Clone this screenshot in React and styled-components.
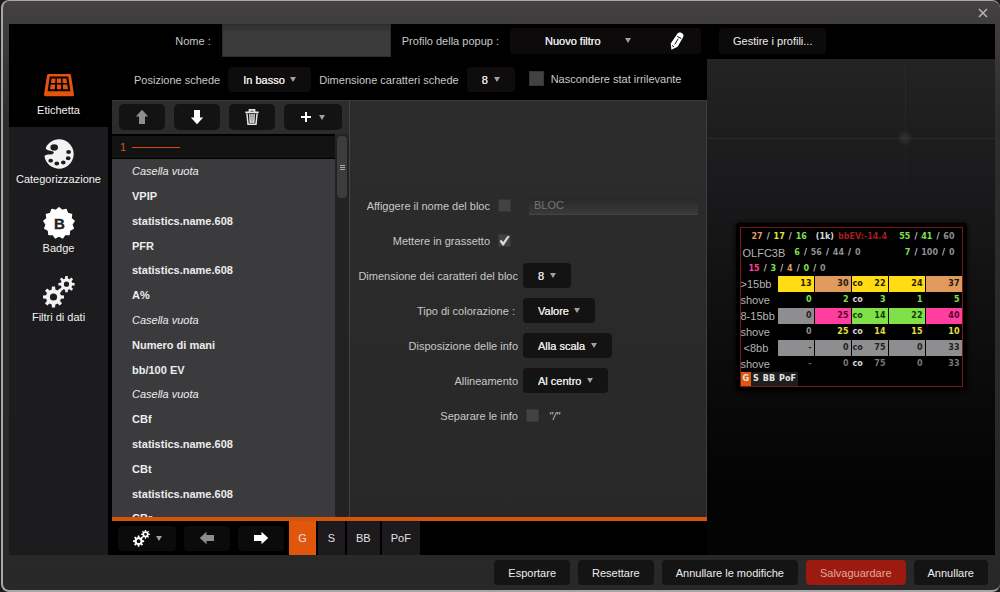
import React from 'react';
import styled, { createGlobalStyle, css } from 'styled-components';

const GlobalStyle = createGlobalStyle`
  * { box-sizing: border-box; }

  body {
    margin: 0;
    background: #1c1c1c;
    color: #c8c8c8;
    font: 11px/14px "Liberation Sans", Arial, sans-serif;
  }

  button, input, select { font: inherit; color: inherit; }
  ul { list-style: none; margin: 0; padding: 0; }
`;

const statItems = [
  { name: 'Casella vuota', empty: true },
  { name: 'VPIP' },
  { name: 'statistics.name.608' },
  { name: 'PFR' },
  { name: 'statistics.name.608' },
  { name: 'A%' },
  { name: 'Casella vuota', empty: true },
  { name: 'Numero di mani' },
  { name: 'bb/100 EV' },
  { name: 'Casella vuota', empty: true },
  { name: 'CBf' },
  { name: 'statistics.name.608' },
  { name: 'CBt' },
  { name: 'statistics.name.608' },
  { name: 'CBr' },
];

const colors = {
  yellow: '#ffdc14',
  tan: '#e09a5e',
  green: '#7fe04a',
  pink: '#ff3e9e',
  grey: '#8e8e90',
  red: '#a81d1d',
  white: '#d8d8d8',
  lemon: '#e6e03c',
};

// [text, text colour, fill]
const hudRows = [
  { label: '>15bb', cells: [['13', '#2a2000', 'yellow'], ['30', '#2a1808', 'tan'], ['22', '#2a2000', 'yellow'], ['24', '#2a2000', 'yellow'], ['37', '#2a1808', 'tan']] },
  { label: 'shove', cells: [['0', colors.green], ['2', colors.green], ['3', colors.green], ['1', colors.green], ['5', colors.green]] },
  { label: '8-15bb', cells: [['0', '#222', 'grey'], ['25', '#5c0030', 'pink'], ['14', '#123c00', 'green'], ['22', '#123c00', 'green'], ['40', '#5c0030', 'pink']] },
  { label: 'shove', cells: [['0', colors.grey], ['25', colors.lemon], ['14', colors.lemon], ['15', colors.lemon], ['10', colors.lemon]] },
  { label: '<8bb', indent: true, cells: [['-', '#222', 'grey'], ['0', '#222', 'grey'], ['75', '#222', 'grey'], ['0', '#222', 'grey'], ['33', '#222', 'grey']] },
  { label: 'shove', cells: [['-', '#666'], ['0', '#77777a'], ['75', '#77777a'], ['0', '#77777a'], ['33', '#77777a']] },
];

const gearPath = (cx, cy, outer, inner, hole, teeth = 8) => {
  const points = [];
  for (let i = 0; i < teeth; i++) {
    const a = (i * 2 * Math.PI) / teeth;
    const step = Math.PI / teeth;
    [[-0.62, inner], [-0.38, outer], [0.38, outer], [0.62, inner]].forEach(([k, r]) => {
      points.push(`${(cx + r * Math.sin(a + k * step)).toFixed(2)} ${(cy - r * Math.cos(a + k * step)).toFixed(2)}`);
    });
  }
  return `M${points.join('L')}ZM${cx - hole} ${cy}a${hole} ${hole} 0 1 0 ${hole * 2} 0a${hole} ${hole} 0 1 0 ${-hole * 2} 0Z`;
};

const sealPoints = Array.from({ length: 26 }, (_, i) => {
  const r = i % 2 ? 12.8 : 15.2;
  const a = (i * Math.PI) / 13;
  return `${(16 + r * Math.sin(a)).toFixed(2)},${(16 - r * Math.cos(a)).toFixed(2)}`;
}).join(' ');

const GearsIcon = ({ size = 32 }) => (
  <svg width={size} height={size} viewBox="0 0 32 32" fill="currentColor" fillRule="evenodd" aria-hidden="true">
    <path d={gearPath(10.5, 21, 10.6, 7.6, 3.6)} />
    <path d={gearPath(23.5, 8.2, 8.2, 5.8, 2.6)} />
  </svg>
);

const TableIcon = () => (
  <svg width="32" height="32" viewBox="0 0 32 32" fill="#e8520c" fillRule="evenodd" aria-hidden="true">
    <path d="M5.500 5h21q1.300 0 1.500 1.300L31 25.500q.2 1.700-1.300 1.700H2.300Q.8 27.200 1 25.500L4 6.300Q4.200 5 5.500 5zM6.800 7.600L4.600 22.200h22.800L25.200 7.600z" />
    <path d="M8.600 9.400h4l-.3 4.700H7.900zM13.900 9.400h4.200v4.700h-4.200zM19.400 9.400h4l.7 4.700h-4.400zM7.700 15.400h4.500l-.3 4.900H7zM13.900 15.400h4.200v4.900h-4.200zM19.800 15.400h4.500l.7 4.900h-4.900z" />
  </svg>
);

const PaletteIcon = () => (
  <svg width="32" height="32" viewBox="0 0 32 32" fill="currentColor" fillRule="evenodd" aria-hidden="true">
    <path d="M4 7.400A14.700 14.700 0 1 1 1.400 18C4 15.400 9.600 17.600 10.700 15C11.400 12.900 7 13.400 4 11.800C2.200 10.800 2.600 9.300 4 7.400ZM7.400 9.400a3.800 3.100 0 1 0 7.600 0a3.800 3.100 0 1 0-7.600 0ZM23.200 14a2.400 2 0 1 0 4.800 0a2.400 2 0 1 0-4.800 0ZM22.800 20.300a2.400 2 0 1 0 4.800 0a2.400 2 0 1 0-4.800 0ZM18 24.400a2.300 2 0 1 0 4.600 0a2.300 2 0 1 0-4.600 0ZM11.400 25.500a2.400 1.900 0 1 0 4.800 0a2.400 1.900 0 1 0-4.800 0ZM5.400 22.700a2.300 1.900 0 1 0 4.600 0a2.300 1.900 0 1 0-4.600 0Z" />
  </svg>
);

const BadgeIcon = () => (
  <svg width="32" height="32" viewBox="0 0 32 32" aria-hidden="true">
    <polygon points={sealPoints} fill="#fff" stroke="#fff" strokeWidth="1.500" strokeLinejoin="round" />
    <text x="16.5" y="21.5" fill="#222" stroke="#222" strokeWidth="0.400" fontSize="15" fontWeight="bold" textAnchor="middle" fontFamily="Liberation Sans">B</text>
  </svg>
);

const ArrowIcon = ({ turn = 0, color = '#fff' }) => (
  <svg width="16" height="16" viewBox="0 0 16 16" fill={color} aria-hidden="true">
    <path transform={`rotate(${turn} 8 8)`} d="M8 .8l6.200 6.700H11V15H5V7.500H1.800z" />
  </svg>
);

const TrashIcon = () => (
  <svg width="16" height="16" viewBox="0 0 16 16" fill="none" stroke="#e4e4e4" aria-hidden="true">
    <path d="M5.500 2.500V.8h5v1.700M1.300 3.300h13.400" strokeWidth="1.800" />
    <path d="M2.900 4.500l1.100 10.700h8l1.100-10.700M5.800 5l.5 9M8 5v9M10.200 5l-.5 9" strokeWidth="1.500" />
  </svg>
);

const PlusIcon = () => (
  <svg width="10" height="10" viewBox="0 0 10 10" stroke="#fff" strokeWidth="2" aria-hidden="true">
    <path d="M5 0v10M0 5h10" />
  </svg>
);

const PencilIcon = () => (
  <svg width="14" height="18" viewBox="0 0 14 18" aria-hidden="true">
    <path d="M7.200 2C8.300.3 10 .1 11.600.9c1.900 1 2.400 2.500 1.500 4.300L7.600 14.700 1.400 17.800.7 11.600z" fill="#fff" />
    <path d="M7.300 4.300l4 2.300M8.300 6.600l-3.600 6M2 13.500l1.900 1.200" stroke="#111" strokeWidth="1" fill="none" />
  </svg>
);

const Caret = () => (
  <svg width="6" height="5" viewBox="0 0 6 5" fill="#a0a0a0" aria-hidden="true">
    <path d="M0 0h6L3 5z" />
  </svg>
);

const Dropdown = ({ value, ...props }) => (
  <SelectBox $wide={props.$wide} $flat={props.$flat}>
    <select id={props.id} defaultValue={value}>
      <option>{value}</option>
    </select>
    <Caret />
  </SelectBox>
);

const Stats = ({ values }) => (
  <StatGroup>
    {values.map(([text, color], i) => (
      <React.Fragment key={i}>
        {i > 0 && <span>/</span>}
        <HudText $color={color}>{text}</HudText>
      </React.Fragment>
    ))}
  </StatGroup>
);

const Preview = () => (
  <HudWindow>
    <HudFrame>
      <HudLine $start={11}>
        <Stats values={[['27', colors.tan], ['17', colors.lemon], ['16', colors.green]]} />
        <StatGroup>
          <HudText $color={colors.white}>(1k)</HudText>
          <HudText $color={colors.red}>bbEV:-14.4</HudText>
        </StatGroup>
        <PushRight>
          <Stats values={[['55', colors.green], ['41', colors.green], ['60', colors.grey]]} />
        </PushRight>
      </HudLine>
      <HudLine $start={2}>
        <PlayerName>OLFC3B</PlayerName>
        <Stats values={[['6', colors.green], ['56', colors.grey], ['44', colors.grey], ['0', colors.grey]]} />
        <PushRight>
          <Stats values={[['7', colors.green], ['100', colors.grey], ['0', colors.grey]]} />
        </PushRight>
      </HudLine>
      <HudLine $start={8}>
        <Stats values={[['15', colors.pink], ['3', colors.green], ['4', colors.tan], ['0', colors.green], ['0', colors.grey]]} />
      </HudLine>
      <HudTable>
        <tbody>
          {hudRows.map((row, i) => (
            <tr key={i}>
              <HudLabel scope="row" $indent={row.indent}>{row.label}</HudLabel>
              {row.cells.map(([text, color, fill], j) => (
                <HudCell key={j} $color={color} $fill={colors[fill]}>
                  <div>
                    {j === 2 && <HudText $color={fill ? color : colors.white}>co</HudText>}
                    <span>{text}</span>
                  </div>
                </HudCell>
              ))}
            </tr>
          ))}
        </tbody>
      </HudTable>
      <HudTabs>
        <HudTab $active>G</HudTab>
        <HudTab>S</HudTab>
        <HudTab>BB</HudTab>
        <HudTab>PoF</HudTab>
      </HudTabs>
    </HudFrame>
  </HudWindow>
);

const App = () => (
  <>
    <GlobalStyle />
    <Window>
      <TitleBar>
        <CloseButton aria-label="Chiudi">
          <svg width="10" height="10" viewBox="0 0 10 10" stroke="#b4b2b2" strokeWidth="1.600" aria-hidden="true">
            <path d="M1 1l8 8M9 1L1 9" />
          </svg>
        </CloseButton>
      </TitleBar>

      <Body>
        <Sidebar>
          <NavItem $active><TableIcon />Etichetta</NavItem>
          <NavItem><PaletteIcon />Categorizzazione</NavItem>
          <NavItem><BadgeIcon />Badge</NavItem>
          <NavItem><GearsIcon />Filtri di dati</NavItem>
        </Sidebar>

        <Editor>
          <ProfileRow>
            <label htmlFor="name">Nome :</label>
            <NameInput id="name" />
            <label htmlFor="popup">Profilo della popup :</label>
            <ProfileBox>
              <Dropdown id="popup" value="Nuovo filtro" $wide />
              <IconButton aria-label="Modifica"><PencilIcon /></IconButton>
            </ProfileBox>
          </ProfileRow>

          <OptionsRow>
            <label htmlFor="position">Posizione schede</label>
            <Dropdown id="position" value="In basso" $flat />
            <label htmlFor="tabSize">Dimensione caratteri schede</label>
            <Dropdown id="tabSize" value="8" $flat />
            <HideOption>
              <Checkbox id="hide" $large />
              <label htmlFor="hide">Nascondere stat irrilevante</label>
            </HideOption>
          </OptionsRow>

          <Panels>
            <ListPanel>
              <Toolbar>
                <ToolButton aria-label="Su"><ArrowIcon color="#8d8d8d" /></ToolButton>
                <ToolButton aria-label="Giù"><ArrowIcon turn={180} /></ToolButton>
                <ToolButton aria-label="Elimina"><TrashIcon /></ToolButton>
                <ToolButton $wide aria-label="Aggiungi"><PlusIcon /><Caret /></ToolButton>
              </Toolbar>
              <ListArea>
                <StatList>
                  <ListHeader>1<Dash /></ListHeader>
                  {statItems.map((item, i) => (
                    <StatItem key={i} $empty={item.empty}>{item.name}</StatItem>
                  ))}
                </StatList>
                <Scrollbar>
                  <Thumb><i /><i /><i /></Thumb>
                </Scrollbar>
              </ListArea>
            </ListPanel>

            <Form>
              <Field $short>
                <label htmlFor="showName">Affiggere il nome del bloc</label>
                <Checkbox id="showName" />
                <BlocInput aria-label="Nome del bloc" placeholder="BLOC" disabled />
              </Field>
              <Field $short>
                <label htmlFor="bold">Mettere in grassetto</label>
                <Checkbox id="bold" defaultChecked />
              </Field>
              <Field>
                <label htmlFor="fontSize">Dimensione dei caratteri del bloc</label>
                <Dropdown id="fontSize" value="8" />
              </Field>
              <Field>
                <label htmlFor="coloring">{'Tipo di colorazione : '}</label>
                <Dropdown id="coloring" value="Valore" />
              </Field>
              <Field>
                <label htmlFor="layout">Disposizione delle info</label>
                <Dropdown id="layout" value="Alla scala" />
              </Field>
              <Field>
                <label htmlFor="align">Allineamento</label>
                <Dropdown id="align" value="Al centro" />
              </Field>
              <Field $loose>
                <label htmlFor="separate">Separare le info</label>
                <Checkbox id="separate" />
                <em>"/"</em>
              </Field>
            </Form>
          </Panels>

          <TabBar>
            <BarButtons>
              <BarButton $wide aria-label="Impostazioni"><GearsIcon size={17} /><Caret /></BarButton>
              <BarButton aria-label="Indietro"><ArrowIcon turn={-90} color="#8d8d8d" /></BarButton>
              <BarButton aria-label="Avanti"><ArrowIcon turn={90} /></BarButton>
            </BarButtons>
            <Tab $active>G</Tab>
            <Tab>S</Tab>
            <Tab>BB</Tab>
            <Tab>PoF</Tab>
          </TabBar>
        </Editor>

        <PreviewColumn>
          <PreviewHeader>
            <ManageButton>Gestire i profili...</ManageButton>
          </PreviewHeader>
          <PreviewArea>
            <Preview />
          </PreviewArea>
        </PreviewColumn>
      </Body>

      <Footer>
        <FooterButton>Esportare</FooterButton>
        <FooterButton>Resettare</FooterButton>
        <FooterButton>Annullare le modifiche</FooterButton>
        <FooterButton $primary>Salvaguardare</FooterButton>
        <FooterButton>Annullare</FooterButton>
      </Footer>
    </Window>
  </>
);

const Window = styled.div`
  display: flex;
  flex-direction: column;
  height: 100vh;
  min-height: 560px;
  margin-left: 1px;
  padding: 0 5px 0 6px;
  border: 2px solid #a6a8a8;
  border-top-width: 1px;
  border-right: 0;
  border-radius: 8px;
  background: linear-gradient(#454042, #403d3e 24px, #2c2c2c 120px, #282828);
  overflow: hidden;
`;

const TitleBar = styled.header`
  display: flex;
  justify-content: flex-end;
  align-items: center;
  flex: 0 0 23px;
  padding-right: 5px;
`;

const bareButton = css`
  display: inline-flex;
  align-items: center;
  justify-content: center;
  border: 0;
  padding: 0;
  background: none;
  cursor: pointer;
`;

const CloseButton = styled.button`
  ${bareButton}
  width: 14px;
  height: 14px;
`;

const Body = styled.main`
  display: grid;
  grid-template-columns: 99px minmax(0, 1fr) 288px;
  grid-template-rows: minmax(0, 1fr);
  flex: 1;
  min-height: 0;
  background: #000;
`;

const Sidebar = styled.nav`
  background: #1c1b1d;
`;

const NavItem = styled.button`
  ${bareButton}
  flex-direction: column;
  gap: 2px;
  width: 100%;
  padding: 11px 0 10px;
  color: #f2f2f2;
  white-space: nowrap;

  ${({ $active }) => $active && css`
    padding-top: 45px;
    background: #000;
  `}
`;

const Editor = styled.section`
  display: flex;
  flex-direction: column;
  min-width: 0;
  min-height: 0;
`;

const ProfileRow = styled.div`
  display: flex;
  align-items: center;
  justify-content: flex-end;
  gap: 11px;
  flex: 0 0 35px;
  padding: 0 6px 2px 0;
  white-space: nowrap;
`;

const NameInput = styled.input`
  flex: 0 1 169px;
  min-width: 60px;
  height: 33px;
  padding: 0 8px;
  border: 1px solid #2c2c2c;
  background: linear-gradient(#303030, #3b3b3b 8px);
`;

const ProfileBox = styled.div`
  display: flex;
  align-items: center;
  height: 26px;
  border-radius: 4px;
  background: #0c0a0b;
`;

const IconButton = styled.button`
  ${bareButton}
  width: 48px;
  height: 26px;
`;

const SelectBox = styled.span`
  display: inline-grid;
  align-items: center;
  height: 25px;
  border-radius: 4px;
  background: ${({ $flat, $wide }) => ($wide ? 'none' : $flat ? '#0e0c0d' : '#131314')};

  select {
    grid-area: 1 / 1;
    appearance: none;
    width: ${({ $wide }) => ($wide ? '143px' : 'auto')};
    height: 25px;
    padding: ${({ $wide }) => ($wide ? '0 29px 0 35px' : '0 26px 0 15px')};
    border: 0;
    background: none;
    color: #e4e4e4;
    text-shadow: 0 0 0 #e4e4e4;
    cursor: pointer;
  }

  svg {
    grid-area: 1 / 1;
    justify-self: end;
    margin-right: ${({ $wide }) => ($wide ? '22px' : '15px')};
    pointer-events: none;
  }
`;

const OptionsRow = styled.div`
  display: flex;
  align-items: center;
  gap: 8px;
  flex: 0 0 41px;
  padding-left: 26px;
  white-space: nowrap;
`;

const HideOption = styled.span`
  display: flex;
  align-items: center;
  gap: 7px;
  margin-left: 6px;
  padding-bottom: 2px;
`;

const Checkbox = styled.input.attrs({ type: 'checkbox' })`
  appearance: none;
  display: grid;
  place-items: center;
  width: ${({ $large }) => ($large ? 15 : 13)}px;
  height: ${({ $large }) => ($large ? 15 : 13)}px;
  margin: 0;
  border: 1px solid #363636;
  background: #434243;

  &:checked::before {
    content: '';
    width: 10px;
    height: 10px;
    background: #dcdcdc;
    clip-path: polygon(0 55%, 18% 42%, 36% 66%, 84% 0, 100% 10%, 42% 100%, 30% 100%);
  }
`;

const Panels = styled.div`
  display: flex;
  flex: 1;
  min-height: 0;
  margin-left: 4px;
  border-top: 1px solid #3a3a3a;
  background: linear-gradient(#2c2c2c, #282828);
`;

const ListPanel = styled.div`
  display: flex;
  flex-direction: column;
  flex: 0 0 238px;
  border-right: 1px solid #444;
`;

const Toolbar = styled.div`
  display: flex;
  gap: 9px;
  flex: 0 0 33px;
  padding: 3px 7px;
`;

const ToolButton = styled.button`
  ${bareButton}
  gap: 8px;
  flex: ${({ $wide }) => ($wide ? 58 : 46)} 1 0;
  height: 26px;
  border-radius: 5px;
  background: #131314;
`;

const ListArea = styled.div`
  display: flex;
  flex: 1;
  min-height: 0;
`;

const StatList = styled.ul`
  flex: 1;
  overflow: hidden;
  background: #3b3b3d;
`;

const ListHeader = styled.li`
  display: flex;
  align-items: center;
  gap: 6px;
  height: 25px;
  padding-left: 8px;
  border: solid #000;
  border-width: 2px 0 1px;
  background: #131212;
  color: #d2581a;
`;

const Dash = styled.span`
  width: 48px;
  height: 1px;
  background: #d84c14;
`;

const StatItem = styled.li`
  height: 25px;
  padding-left: 20px;
  line-height: 25px;
  color: #ededed;
  font-weight: ${({ $empty }) => ($empty ? 'normal' : 'bold')};
  font-style: ${({ $empty }) => ($empty ? 'italic' : 'normal')};

  &:nth-child(5n) {
    height: 24px;
  }
`;

const Scrollbar = styled.div`
  flex: 0 0 14px;
  padding: 2px;
  border-radius: 5px;
  background: #222;
`;

const Thumb = styled.div`
  display: flex;
  flex-direction: column;
  align-items: center;
  justify-content: center;
  gap: 1px;
  height: 62px;
  border-radius: 4px;
  background: #3c3c3c;

  i {
    width: 5px;
    height: 1px;
    background: #aaa;
  }
`;

const Form = styled.form`
  display: flex;
  flex-direction: column;
  justify-content: center;
  flex: 1;
  min-width: 0;
  padding: 3px 8px 0 0;
  border-right: 1px solid #3e3e3e;
`;

const Field = styled.div`
  display: flex;
  align-items: center;
  gap: ${({ $short, $loose }) => ($short || $loose ? 8 : 5)}px;
  height: 35px;

  label {
    flex: 0 0 ${({ $short }) => ($short ? 140 : 168)}px;
    text-align: right;
    white-space: pre;
  }

  em { margin-left: 2px; }
`;

const BlocInput = styled.input`
  flex: 1;
  min-width: 0;
  height: 18px;
  margin-left: 10px;
  padding: 0 5px;
  border: 0;
  border-bottom: 1px solid #444;
  background: linear-gradient(#262626, #3a3a3a);

  &::placeholder { color: #747474; opacity: 1; }
`;

const TabBar = styled.div`
  display: flex;
  gap: 2px;
  flex: 0 0 38px;
  margin-left: 4px;
  border-top: 4px solid #d4530d;
`;

const BarButtons = styled.div`
  display: flex;
  align-items: center;
  gap: 8px;
  padding: 0 3px 0 6px;
`;

const BarButton = styled.button`
  ${bareButton}
  gap: 6px;
  width: ${({ $wide }) => ($wide ? 58 : 46)}px;
  height: 25px;
  border-radius: 4px;
  background: #0c0b0c;
  color: #fff;
`;

const Tab = styled.button`
  ${bareButton}
  min-width: 27px;
  padding: 0 9px;
  background: ${({ $active }) => ($active ? '#e0560a' : '#1c1a1c')};
  color: #e4e0e0;
`;

const PreviewColumn = styled.aside`
  display: flex;
  flex-direction: column;
  min-height: 0;
`;

const PreviewHeader = styled.div`
  display: flex;
  align-items: center;
  flex: 0 0 35px;
  padding: 0 0 2px 12px;
`;

const ManageButton = styled.button`
  ${bareButton}
  height: 26px;
  padding: 0 14px;
  border-radius: 4px;
  background: #0c0a0b;
  color: #ededed;
`;

const PreviewArea = styled.div`
  display: grid;
  place-items: center;
  flex: 1;
  min-height: 0;
  background:
    radial-gradient(circle 8px at 198px 79px, #343434, transparent) no-repeat,
    linear-gradient(#2b2b2b, transparent) 198px 5px / 1px 150px no-repeat,
    linear-gradient(#2a2a2a, #2a2a2a) 0 79px / 100% 1px no-repeat,
    linear-gradient(#232323, #1a191b 25%, #0c0c0c 60%, #040404 85%);
`;

const HudWindow = styled.div`
  padding: 4px;
  border-radius: 4px;
  background: #000;
  box-shadow: 0 0 4px #000;
`;

const HudFrame = styled.div`
  width: 223px;
  border: 1px solid #7a1818;
  color: #c8c8c8;
  font: bold 8px/16px "DejaVu Sans", sans-serif;
`;

const HudLine = styled.div`
  display: flex;
  align-items: center;
  height: 16px;
  padding: 2px 7px 0 ${({ $start }) => $start}px;
  gap: 9px;
`;

const StatGroup = styled.span`
  display: flex;
  gap: 4px;
`;

const HudText = styled.span`
  color: ${({ $color }) => $color};
`;

const PlayerName = styled.span`
  font: 11px/16px "Liberation Sans", sans-serif;
  color: #b4b4b4;
`;

const PushRight = styled.span`
  margin-left: auto;
`;

const HudTable = styled.table`
  width: 100%;
  table-layout: fixed;
  border-collapse: collapse;
`;

const HudLabel = styled.th`
  width: 36px;
  height: 16px;
  padding: 0 0 0 ${({ $indent }) => ($indent ? 3 : 0)}px;
  color: #b4b4b4;
  font: 11px/16px "Liberation Sans", sans-serif;
  text-align: left;
  white-space: nowrap;
`;

const HudCell = styled.td`
  height: 16px;
  padding: 0 0 0 1px;
  color: ${({ $color }) => $color};

  > div {
    display: flex;
    height: 16px;
    padding: 0 2px 0 1px;
    background: ${({ $fill }) => $fill || 'none'};
  }

  > div > span:last-child { margin-left: auto; }
`;

const HudTabs = styled.div`
  display: flex;
  line-height: 14px;
`;

const HudTab = styled.span`
  padding: 0 2px;
  background: ${({ $active }) => ($active ? '#e0560a' : '#1e1e1e')};
  color: #e4e4e4;
`;

const Footer = styled.footer`
  display: flex;
  align-items: center;
  justify-content: flex-end;
  gap: 8px;
  flex: 0 0 35px;
  padding-right: 7px;
`;

const FooterButton = styled.button`
  ${bareButton}
  height: 25px;
  padding: 0 14px;
  border-radius: 4px;
  background: ${({ $primary }) => ($primary ? '#9c1a10' : '#151415')};
  color: ${({ $primary }) => ($primary ? '#e0a8a0' : '#ededed')};
`;

export default App;
